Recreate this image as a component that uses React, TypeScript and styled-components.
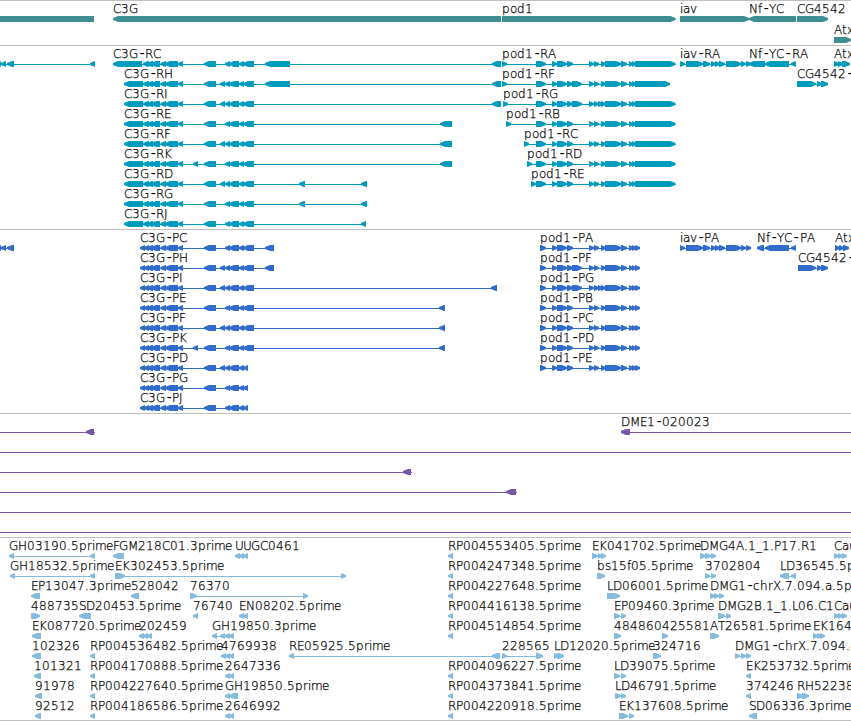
import styled, { createGlobalStyle } from "styled-components";

type Direction = "left" | "right";
type Span = [number, number];

interface IFeature {
  label?: string;
  dir: Direction;
  blocks: Span[];
  // connector line, when it runs past the outer blocks
  line?: Span;
}

interface ITrack {
  name: string;
  color: string;
  height: number;
  laneHeight: number;
  lanes: IFeature[][];
}

const COLOR = {
  GENE: "#3f8e92",
  TRANSCRIPT: "#009bbd",
  PROTEIN: "#316ccc",
  BAC: "#7758a8",
  CLONE: "#87bbdd",
  BORDER: "#bfbfbf",
};

const VIEW_WIDTH = 851;

const left = (label: string, ...blocks: Span[]): IFeature => ({ label, dir: "left", blocks });
const right = (label: string, ...blocks: Span[]): IFeature => ({ label, dir: "right", blocks });

/* C3G */
const c3gMiddle: Span[] = [[147, 153], [151, 160], [160.5, 166], [165, 178], [178, 183], [204, 216]];
const c3gShort: Span[] = [[225, 230], [229, 239], [239, 244]];
const c3gLong: Span[] = [[220, 225], ...c3gShort];

const c3gR = (id: string, isLong: boolean, extra: Span[], first: Span = [124, 143]) =>
  left(`C3G-R${id}`, first, [143, 149], ...c3gMiddle, ...(isLong ? c3gLong : c3gShort), [243, 254], ...extra);

const c3gP = (id: string, isLong: boolean, extra: Span[], end = 254) =>
  left(`C3G-P${id}`, [140, 145], [144, 149], ...c3gMiddle, ...(isLong ? c3gLong : c3gShort), [243, end], ...extra);

/* pod1 */
const pod1 = (name: string, first: Span[], last: Span, extra: Span[] = []) =>
  right(
    `pod1-${name}`,
    ...first,
    [552, 557],
    [557, 567],
    [567, 573],
    [589, 594],
    [594, 599],
    [601, 606],
    [605, 621],
    [621, 627],
    [629, 633],
    [632, 636],
    last,
    ...extra
  );

const pod1R = (id: string, start: number, end = 675.5, extra: Span[] = []) =>
  pod1(`R${id}`, [[start, start + 5], [536, 546]], [635, end], extra);

const pod1P = (id: string, extra: Span[] = []) => pod1(`P${id}`, [[540, 546]], [635, 640], extra);

const iavBlocks: Span[] = [
  [680, 685],
  [686, 703],
  [703, 710],
  [711, 716],
  [715, 720],
  [719, 725],
  [726, 741],
  [741, 746],
  [746, 751],
];
const atxBlocks: Span[] = [[834, 839], [838, 843], [842, 850]];

const tracks: ITrack[] = [
  {
    name: "gene",
    color: COLOR.GENE,
    height: 45,
    laneHeight: 21,
    lanes: [
      [
        { dir: "left", blocks: [[-20, 94]] },
        left("C3G", [113, 501]),
        right("pod1", [502, 675.5]),
        right("iav", [680, 749]),
        left("Nf-YC", [749, 796]),
        right("CG4542", [797, 828]),
      ],
      [right("Atx", [834, 851])],
    ],
  },
  {
    name: "transcript",
    color: COLOR.TRANSCRIPT,
    height: 184,
    laneHeight: 20,
    lanes: [
      [
        { dir: "left", blocks: [[-4, 1], [1, 6], [7, 14], [90, 95]] },
        c3gR("C", false, [[265, 290], [492, 501]], [113, 142]),
        pod1R("A", 502),
        right("iav-RA", ...iavBlocks),
        left("Nf-YC-RA", [749, 765], [765, 789], [791, 796]),
        right("Atx", ...atxBlocks),
      ],
      [
        c3gR("H", true, [[265, 290], [492, 501]]),
        pod1R("F", 502, 670, [[572, 582]]),
        right("CG4542-RA", [797, 816], [817, 822], [821, 828]),
      ],
      [c3gR("I", true, [[492, 501]]), pod1R("G", 503, 675.5, [[572, 582], [598, 603]])],
      [c3gR("E", false, [[440, 452]]), pod1R("B", 506)],
      [c3gR("F", true, [[440, 452]]), pod1R("C", 524)],
      [c3gR("K", false, [[193, 198], [440, 452]]), pod1R("D", 527)],
      [c3gR("D", true, [[299, 305], [361, 367]]), pod1R("E", 531)],
      [c3gR("G", false, [[299, 305], [361, 367]])],
      [c3gR("J", false, [[361, 366]])],
    ],
  },
  {
    name: "protein",
    color: COLOR.PROTEIN,
    height: 184,
    laneHeight: 20,
    lanes: [
      [
        { dir: "left", blocks: [[-4, 1], [1, 6], [7, 14]] },
        c3gP("C", false, [[265, 274]]),
        pod1P("A"),
        right("iav-PA", ...iavBlocks),
        left("Nf-YC-PA", [757, 764], [765, 789], [791, 796]),
        right("Atx", [835, 840], [839, 844], [843, 849]),
      ],
      [
        c3gP("H", true, [[265, 274]]),
        pod1P("F", [[572, 582]]),
        right("CG4542-PA", [798, 816], [817, 822], [821, 828]),
      ],
      [c3gP("I", true, [[491, 497]]), pod1P("G", [[572, 582], [598, 603]])],
      [c3gP("E", false, [[439, 445]]), pod1P("B")],
      [c3gP("F", true, [[439, 445]]), pod1P("C")],
      [c3gP("K", false, [[193, 198], [439, 445]]), pod1P("D")],
      [c3gP("D", true, [], 248), pod1P("E")],
      [c3gP("G", false, [], 248)],
      [c3gP("J", false, [], 248)],
    ],
  },
  {
    name: "bac",
    color: COLOR.BAC,
    height: 124,
    laneHeight: 20,
    lanes: [
      [
        { dir: "left", blocks: [[86, 94]], line: [0, 95] },
        { label: "DME1-020023", dir: "left", blocks: [[621, 630]], line: [621, 851] },
      ],
      [{ dir: "left", blocks: [], line: [0, 851] }],
      [{ dir: "left", blocks: [[403, 411]], line: [0, 412] }],
      [{ dir: "left", blocks: [[506, 516]], line: [0, 517] }],
      [{ dir: "left", blocks: [], line: [0, 851] }],
      [{ dir: "left", blocks: [], line: [0, 851] }],
    ],
  },
  {
    name: "clone",
    color: COLOR.CLONE,
    height: 183,
    laneHeight: 20,
    lanes: [
      [
        left("GH03190.5prime", [9, 14], [90, 95]),
        left("FGM218C01.3prime", [113, 124]),
        left("UUGC0461", [235, 240], [239, 244], [243, 248]),
        left("RP004553405.5prime", [448, 453]),
        right("EK041702.5prime", [592, 598], [598, 602], [601, 606]),
        right("DMG4A.1_1.P17.R1", [700, 706], [705, 711], [711, 716]),
        right("Cau", [834, 839], [838, 843], [842, 847]),
      ],
      [
        left("GH18532.5prime", [10, 15], [90, 95]),
        right("EK302453.5prime", [115, 125], [341, 346]),
        left("RP004247348.5prime", [448, 453]),
        right("bs15f05.5prime", [597, 605]),
        right("3702804", [705, 710], [711, 716]),
        left("LD36545.5prime", [780, 789], [791, 796]),
      ],
      [
        left("EP13047.3prime", [31, 40]),
        left("528042", [131, 139]),
        right("76370", [190, 197], [303, 308]),
        left("RP004227648.5prime", [448, 453]),
        right("LD06001.5prime", [607, 620]),
        right("DMG1-chrX.7.094.a.5prime", [710, 715], [714, 719], [719, 724]),
      ],
      [
        right("488735", [31, 40]),
        left("SD20453.5prime", [79, 91]),
        left("76740", [193, 198]),
        left("EN08202.5prime", [239, 244], [243, 248]),
        left("RP004416138.5prime", [448, 453]),
        right("EP09460.3prime", [614, 620], [621, 626]),
        right("DMG2B.1_1.L06.C1", [718, 725], [726, 731]),
        right("Cau", [834, 839], [838, 843], [842, 847]),
      ],
      [
        left("EK087720.5prime", [32, 41]),
        left("202459", [139, 144], [143, 148], [147, 152]),
        left("GH19850.3prime", [212, 217], [220, 225], [225, 230], [229, 234]),
        left("RP004514854.5prime", [448, 453]),
        right("484860", [614, 621]),
        right("425581", [662, 668]),
        right("AT26581.5prime", [710, 719]),
        right("EK164", [813, 818], [817, 822], [820, 825]),
      ],
      [
        left("102326", [32, 41]),
        left("RP004536482.5prime", [90, 95]),
        left("4769938", [221, 226], [225, 230], [229, 234]),
        left("RE05925.5prime", [289, 294], [492, 500]),
        right("228565", [502, 507], [536, 543]),
        right("LD12020.5prime", [554, 559], [557, 564]),
        right("324716", [653, 661]),
        right("DMG1-chrX.7.094.a", [735, 740], [741, 746], [746, 751]),
      ],
      [
        left("101321", [34, 41]),
        left("RP004170888.5prime", [90, 95]),
        left("2647336", [225, 230], [229, 234]),
        left("RP004096227.5prime", [448, 453]),
        right("LD39075.5prime", [614, 620], [621, 626]),
        left("EK253732.5prime", [746, 751]),
      ],
      [
        left("91978", [35, 42]),
        left("RP004227640.5prime", [90, 95]),
        left("GH19850.5prime", [225, 230], [229, 238]),
        left("RP004373841.5prime", [448, 453]),
        right("LD46791.5prime", [615, 621], [621, 626]),
        left("374246", [746, 751]),
        right("RH52238", [797, 803], [802, 809]),
      ],
      [
        left("92512", [35, 41]),
        left("RP004186586.5prime", [90, 95]),
        left("2646992", [225, 230], [229, 234]),
        left("RP004220918.5prime", [448, 453]),
        right("EK137608.5prime", [619, 628], [629, 634]),
        left("SD06336.3prime", [749, 757]),
      ],
    ],
  },
];

const TOP = 15;
const BOTTOM = 21;

const blockPath = ([start, end]: Span, dir: Direction) => {
  const head = Math.min(5, end - start);
  const tip = dir === "left" ? start : end;
  const tail = dir === "left" ? end : start;
  const neck = dir === "left" ? start + head : end - head;
  return `M${tail} ${TOP}H${neck}L${tip} ${TOP + 2}V${TOP + 4}L${neck} ${BOTTOM}H${tail}Z`;
};

const ADVANCE: Record<string, number> = {
  ".": 4, "-": 7.4, _: 6,
  D: 9, E: 7, F: 6, G: 9, H: 9, K: 7.5, L: 6, M: 10, N: 9, P: 7, S: 7, T: 7, Y: 7,
  a: 7, c: 7, e: 7, f: 4, i: 3, m: 11, o: 7, r: 5, s: 6, t: 5, v: 7, x: 7,
};

const glyphPositions = (text: string, start: number) => {
  let x = start;
  return [...text].map((char) => {
    const position = x;
    x += ADVANCE[char] ?? 8;
    return Math.round(position);
  });
};

const Feature = ({ feature, color }: { feature: IFeature; color: string }) => {
  const { label, dir, blocks, line } = feature;
  const [from, to] = line ?? [Math.min(...blocks.map((b) => b[0])), Math.max(...blocks.map((b) => b[1]))];

  return (
    <g fill={color}>
      <rect x={from} y={18} width={to - from} height={1} />
      {blocks.map((block) => (
        <path key={block.join()} d={blockPath(block, dir)} />
      ))}
      {label && (
        <Label x={glyphPositions(label, from).join(" ")} y={12}>
          {label.split(/(-)/).map((part, i) => (part === "-" ? <Dash key={i}>-</Dash> : part))}
        </Label>
      )}
    </g>
  );
};

const App = () => (
  <>
    <GlobalStyle />
    <Browser>
      {tracks.map(({ name, color, height, laneHeight, lanes }) => (
        <Track key={name} $height={height}>
          {lanes.map((features, i) => (
            <Lane key={i} $height={laneHeight} viewBox={`0 0 ${VIEW_WIDTH} ${laneHeight}`}>
              {features.map((feature, j) => (
                <Feature key={j} feature={feature} color={color} />
              ))}
            </Lane>
          ))}
        </Track>
      ))}
    </Browser>
  </>
);

const GlobalStyle = createGlobalStyle`
  body {
    margin: 0;
    background-color: #fff;
    overflow: hidden;
  }
`;

const Browser = styled.main`
  display: flex;
  flex-direction: column;
  width: ${VIEW_WIDTH}px;
  border-bottom: 1px solid ${COLOR.BORDER};
  overflow: hidden;
`;

const Track = styled.section<{ $height: number }>`
  display: flex;
  flex-direction: column;
  box-sizing: border-box;
  height: ${(props) => props.$height}px;
  border-top: 1px solid ${COLOR.BORDER};
`;

const Lane = styled.svg<{ $height: number }>`
  flex: none;
  width: ${VIEW_WIDTH}px;
  height: ${(props) => props.$height}px;
  overflow: visible;
`;

const Label = styled.text`
  fill: #000;
  stroke: #000;
  stroke-width: 0.25px;
  font-family: "DejaVu Sans", sans-serif;
  font-size: 12px;
  font-weight: 200;
`;

const Dash = styled.tspan`
  stroke: none;
  font-family: "Liberation Mono", monospace;
  font-size: 14px;
`;

export default App;
